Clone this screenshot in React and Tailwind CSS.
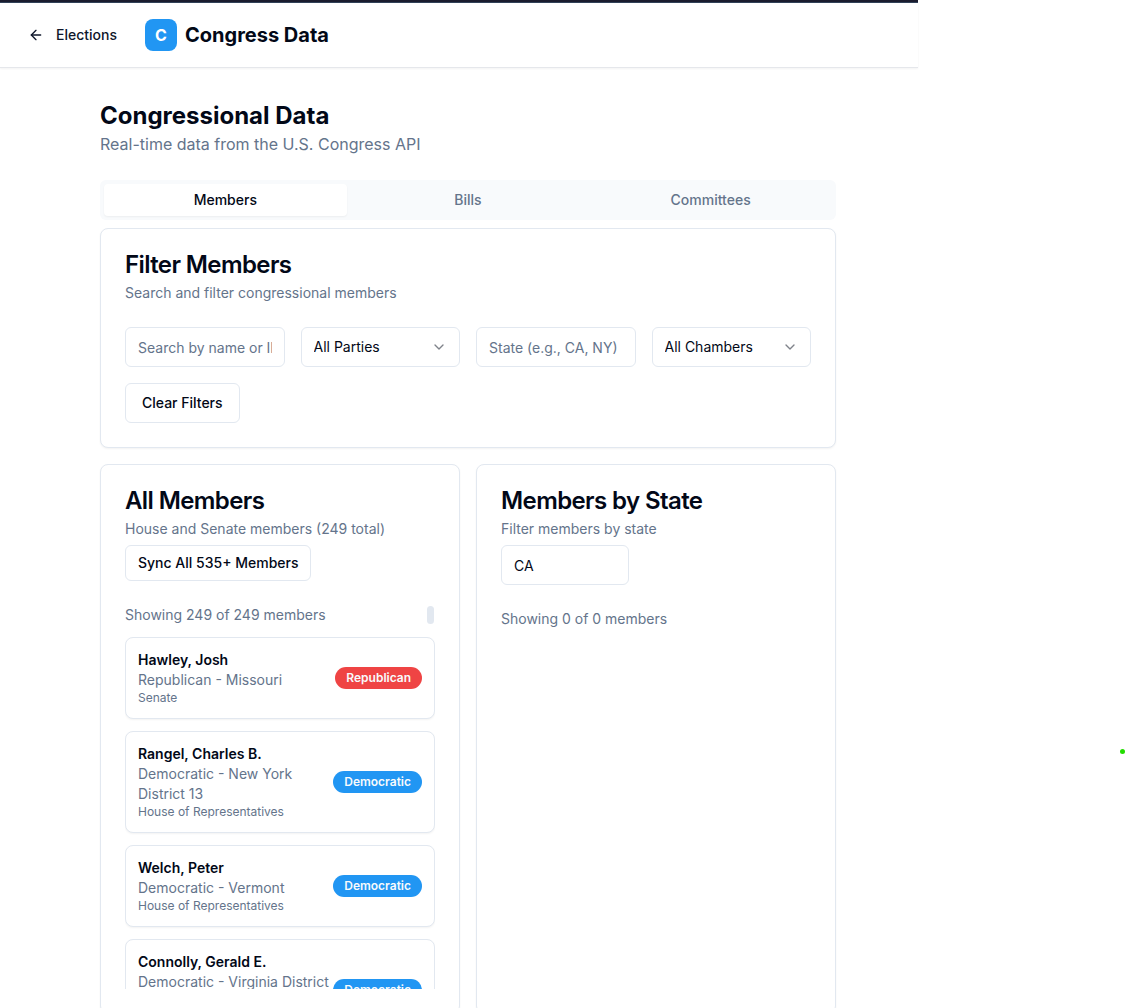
import { useState } from "react";
import { ArrowLeft, ChevronDown } from "lucide-react";

const MEMBERS = [
  { name: "Hawley, Josh", party: "Republican", place: "Missouri", chamber: "Senate" },
  { name: "Rangel, Charles B.", party: "Democratic", place: "New York District 13", chamber: "House of Representatives" },
  { name: "Welch, Peter", party: "Democratic", place: "Vermont", chamber: "House of Representatives" },
  { name: "Connolly, Gerald E.", party: "Democratic", place: "Virginia District 11", chamber: "House of Representatives" },
];

const TABS = ["Members", "Bills", "Committees"];

function Card({ title, description, action, children }) {
  return (
    <section className="rounded-lg border border-slate-200 bg-white p-6 shadow-xs">
      <div className="flex flex-col items-start gap-1.5">
        <h2 className="text-2xl leading-none font-semibold tracking-tight">{title}</h2>
        <p className="text-sm text-[#64748b]">{description}</p>
        {action}
      </div>
      <div className="mt-6">{children}</div>
    </section>
  );
}

function TextField({ className = "w-full", ...props }) {
  return (
    <input
      type="text"
      className={`h-10 min-w-0 rounded-md border border-slate-200 bg-white px-3 py-2 text-sm placeholder:text-[#64748b] ${className}`}
      {...props}
    />
  );
}

function SelectField({ label, options }) {
  return (
    <div className="relative">
      <select
        aria-label={label}
        className="h-10 w-full appearance-none rounded-md border border-slate-200 bg-white px-3 py-2 text-sm"
      >
        {options.map((option) => (
          <option key={option}>{option}</option>
        ))}
      </select>
      <ChevronDown className="pointer-events-none absolute top-3 right-[13px] size-4 opacity-50" />
    </div>
  );
}

function MemberCard({ member }) {
  return (
    <li className="flex items-center justify-between rounded-lg border border-slate-200 bg-white p-3 shadow-xs">
      <div className="text-sm text-[#64748b]">
        <h3 className="font-semibold text-[#020817]">{member.name}</h3>
        <p>
          {member.party} - {member.place}
        </p>
        <p className="text-xs">{member.chamber}</p>
      </div>
      <span
        className={`shrink-0 rounded-full border border-transparent px-2.5 py-0.5 text-xs font-semibold text-slate-50 ${
          member.party === "Republican" ? "bg-[#ef4444]" : "bg-[#2196f3]"
        }`}
      >
        {member.party}
      </span>
    </li>
  );
}

export default function App() {
  const [tab, setTab] = useState("Members");

  return (
    <div className="relative flex h-screen overflow-hidden bg-white font-[Inter,sans-serif] text-[#020817]">
      <div className="min-w-0 flex-1">
        <div className="h-[3px] border-b border-slate-700 bg-[#1a1c2e]" />
        <header className="flex h-[65px] items-center border-b border-gray-200 pl-7 shadow-xs">
          <a href="#elections" className="flex items-center gap-3 text-sm font-medium text-slate-900">
            <ArrowLeft className="size-4" />
            Elections
          </a>
          <div className="ml-7 flex items-center gap-2">
            <span className="flex size-8 items-center justify-center rounded-lg bg-[#2196f3] font-bold text-white">C</span>
            <span className="text-xl font-bold">Congress Data</span>
          </div>
        </header>

        <main className="pt-8 pr-[82px] pb-8 pl-[100px]">
          <h1 className="text-2xl font-bold">Congressional Data</h1>
          <p className="text-[#64748b]">Real-time data from the U.S. Congress API</p>

          <div role="tablist" className="mt-6 grid h-10 grid-cols-3 rounded-md bg-slate-50 p-1">
            {TABS.map((name) => (
              <button
                key={name}
                type="button"
                role="tab"
                aria-selected={tab === name}
                onClick={() => setTab(name)}
                className={`rounded-sm text-sm font-medium ${
                  tab === name ? "bg-white text-[#020817] shadow-xs" : "text-[#64748b]"
                }`}
              >
                {name}
              </button>
            ))}
          </div>

          <div className="mt-2 flex flex-col gap-4">
            <Card title="Filter Members" description="Search and filter congressional members">
              <div className="grid grid-cols-4 gap-4">
                <TextField aria-label="Search members" placeholder="Search by name or ID" />
                <SelectField label="Party" options={["All Parties", "Democratic", "Republican"]} />
                <TextField aria-label="State" placeholder="State (e.g., CA, NY)" />
                <SelectField label="Chamber" options={["All Chambers", "House", "Senate"]} />
              </div>
              <button type="button" className="mt-4 h-10 rounded-md border border-slate-200 bg-white px-4 text-sm font-medium">
                Clear Filters
              </button>
            </Card>

            <div className="grid grid-cols-2 gap-4">
              <Card
                title="All Members"
                description="House and Senate members (249 total)"
                action={
                  <button type="button" className="h-9 rounded-md border border-slate-200 bg-white px-3 text-sm font-medium">
                    Sync All 535+ Members
                  </button>
                }
              >
                <div className="relative">
                  <div className="h-96 overflow-y-auto [scrollbar-width:none]">
                    <p className="text-sm text-[#64748b]">Showing 249 of 249 members</p>
                    <ul className="mt-3 flex flex-col gap-3">
                      {MEMBERS.map((member) => (
                        <MemberCard key={member.name} member={member} />
                      ))}
                    </ul>
                  </div>
                  <div className="absolute top-px right-px h-[18px] w-[7px] rounded-full bg-slate-200" />
                </div>
              </Card>

              <Card
                title="Members by State"
                description="Filter members by state"
                action={<TextField aria-label="State code" defaultValue="CA" className="w-32" />}
              >
                <p className="text-sm text-[#64748b]">Showing 0 of 0 members</p>
              </Card>
            </div>
          </div>
        </main>
      </div>

      <aside className="w-[207px] shrink-0" />
      <span className="absolute top-[749px] right-0 size-[5px] rounded-full bg-[#22dd00]" />
    </div>
  );
}
